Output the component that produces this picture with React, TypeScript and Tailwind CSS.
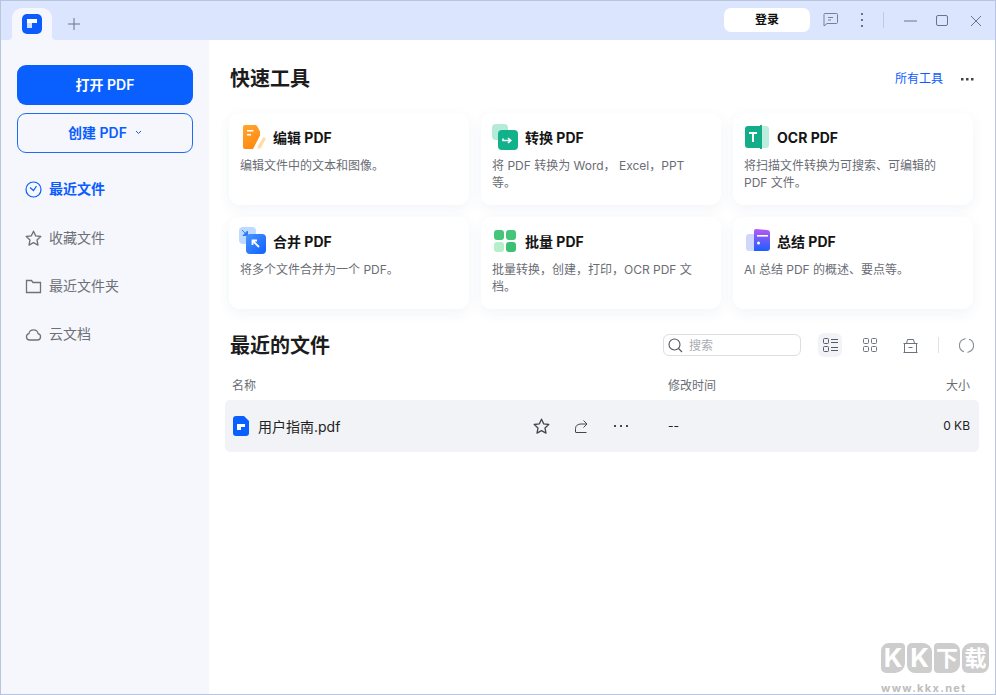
import React from "react";

const font = "font-['Inter','Noto_Sans_CJK_SC',sans-serif]";

const Logo = () => (
  <svg width="20" height="20" viewBox="0 0 20 20">
    <rect width="20" height="20" rx="5" fill="#0a5cff" />
    <path d="M5 5h10v4H5z" fill="#fff" />
    <path d="M5 9h5v5H5z" fill="#cfe0ff" />
  </svg>
);

const EditIcon = () => (
  <svg className="ml-[2px]" width="24" height="24" viewBox="0 0 24 24">
    <defs>
      <linearGradient id="ed" x1="0" y1="0" x2="0.5" y2="1">
        <stop offset="0" stopColor="#ffa733" />
        <stop offset="1" stopColor="#ff8a0f" />
      </linearGradient>
    </defs>
    <path d="M2 0h10c1 0 1.800.5 2.300 1.500L17 6.500v4L10 24H2a2 2 0 0 1-2-2V2a2 2 0 0 1 2-2z" fill="url(#ed)" />
    <path d="M4 5h6.500v1.500H4zM4 9h4v1.500H4z" fill="#fff" />
    <path d="M20.500 12l2.500 1.500L18 23l-3.500 1 .5-3.500z" fill="#ffdca8" />
  </svg>
);

const ConvertIcon = () => (
  <svg className="-ml-[1px]" width="26" height="26" viewBox="0 0 26 26">
    <rect x="0" y="0" width="16" height="16" rx="4" fill="#b4ead8" />
    <rect x="6" y="6" width="20" height="20" rx="4" fill="#11b18a" />
    <path d="M11 14.500v2h7M16 14l2.800 2.500L16 19" fill="none" stroke="#fff" strokeWidth="1.600" />
  </svg>
);

const OcrIcon = () => (
  <svg width="24" height="24" viewBox="0 0 24 24">
    <path d="M17 1h4a3 3 0 0 1 3 3v16a3 3 0 0 1-3 3h-4z" fill="#bdeedd" />
    <path d="M3 1h12v22H3a3 3 0 0 1-3-3V4a3 3 0 0 1 3-3z" fill="#14ad8a" />
    <rect x="15" y="0" width="2" height="24" fill="#14ad8a" />
    <path d="M4 7h8v2H9v8H7V9H4z" fill="#fff" />
  </svg>
);

const MergeIcon = () => (
  <svg className="-ml-[2px] -mt-[1px]" width="27" height="27" viewBox="0 0 27 27">
    <defs>
      <linearGradient id="me" x1="0" y1="0" x2="1" y2="1">
        <stop offset="0" stopColor="#4a94ff" />
        <stop offset="1" stopColor="#0f60ff" />
      </linearGradient>
    </defs>
    <rect x="0" y="0" width="17" height="17" rx="4" fill="#bedbff" />
    <path d="M3 3l5 5M8.500 4v4.500H4z" fill="#2f7cf6" stroke="#2f7cf6" strokeWidth="1" />
    <rect x="7" y="7" width="20" height="20" rx="4" fill="url(#me)" />
    <path d="M20 20l-6-6M13.500 18v-4.500H18" fill="none" stroke="#fff" strokeWidth="1.800" />
  </svg>
);

const BatchIcon = () => (
  <svg width="24" height="24" viewBox="0 0 24 24">
    <rect x="1" y="1" width="10" height="10" rx="3" fill="#45c57a" />
    <rect x="13" y="1" width="10" height="10" rx="3" fill="#45c57a" />
    <rect x="1" y="13" width="10" height="10" rx="3" fill="#b6efc9" />
    <rect x="13" y="13" width="10" height="10" rx="3" fill="#3cc074" />
  </svg>
);

const SummaryIcon = () => (
  <svg width="26" height="24" viewBox="0 0 26 24">
    <defs>
      <linearGradient id="su" x1="0" y1="0" x2="0" y2="1">
        <stop offset="0" stopColor="#b758f5" />
        <stop offset="1" stopColor="#1a60ff" />
      </linearGradient>
    </defs>
    <rect x="1" y="5" width="14" height="17" rx="3" fill="#cfd8fb" />
    <path d="M9 2a2 2 0 0 1 2-2l11 1a3 3 0 0 1 3 3v15a3 3 0 0 1-3 3H9z" fill="url(#su)" />
    <rect x="12" y="6" width="11" height="1.600" fill="#fff" />
    <circle cx="13.500" cy="14" r="1.500" fill="#fff" />
  </svg>
);

const tools = [
  { title: "编辑 PDF", desc: "编辑文件中的文本和图像。", icon: <EditIcon /> },
  { title: "转换 PDF", desc: "将 PDF 转换为 Word， Excel，PPT\n等。", icon: <ConvertIcon /> },
  { title: "OCR PDF", desc: "将扫描文件转换为可搜索、可编辑的\nPDF 文件。", icon: <OcrIcon /> },
  { title: "合并 PDF", desc: "将多个文件合并为一个 PDF。", icon: <MergeIcon /> },
  { title: "批量 PDF", desc: "批量转换，创建，打印，OCR PDF 文\n档。", icon: <BatchIcon /> },
  { title: "总结 PDF", desc: "AI 总结 PDF 的概述、要点等。", icon: <SummaryIcon /> },
];

const Clock = () => (
  <svg width="17" height="17" viewBox="0 0 17 17" fill="none" stroke="#0a5cff" strokeWidth="1.200">
    <circle cx="8.500" cy="8.500" r="7.500" />
    <path d="M5 6.500l3.500 3L11.500 5" />
  </svg>
);

const Star = ({ color = "#6f7278" }: { color?: string }) => (
  <svg width="17" height="17" viewBox="0 0 17 17" fill="none" stroke={color} strokeWidth="1.300" strokeLinejoin="round">
    <path d="M8.500 1.200l2.200 4.700 5.100.6-3.800 3.500 1 5.100-4.500-2.500-4.500 2.500 1-5.100L1.200 6.500l5.100-.6z" />
  </svg>
);

const Folder = () => (
  <svg width="17" height="17" viewBox="0 0 17 17" fill="none" stroke="#6f7278" strokeWidth="1.300">
    <path d="M1.500 2.500h5l1.500 2h7.500v10h-14z" />
  </svg>
);

const Cloud = () => (
  <svg width="17" height="17" viewBox="0 0 17 17" fill="none" stroke="#6f7278" strokeWidth="1.300">
    <path d="M4.500 14a3.200 3.200 0 0 1-.6-6.300 4.700 4.700 0 0 1 9.200 0A3.200 3.200 0 0 1 12.500 14z" />
  </svg>
);

const nav = [
  { label: "最近文件", icon: <Clock />, active: true },
  { label: "收藏文件", icon: <Star /> },
  { label: "最近文件夹", icon: <Folder /> },
  { label: "云文档", icon: <Cloud /> },
];

const App = () => {
  return (
    <div className={`relative w-[996px] h-[695px] overflow-hidden flex flex-col bg-white border border-[#b9c5de] ${font}`}>
      {/* title bar */}
      <div className="h-[39px] shrink-0 flex items-center bg-[#dbe6fe]">
        <div className="relative ml-[11px] mt-[7px] w-[40px] h-[32px] flex items-center justify-center bg-[#f5f7fc] rounded-t-[10px]">
          <svg className="absolute -left-[4px] bottom-0" width="4" height="4" viewBox="0 0 4 4" fill="#f5f7fc">
            <path d="M4 0v4H0a4 4 0 0 0 4-4z" />
          </svg>
          <svg className="absolute -right-[4px] bottom-0" width="4" height="4" viewBox="0 0 4 4" fill="#f5f7fc">
            <path d="M0 0v4h4a4 4 0 0 1-4-4z" />
          </svg>
          <div className="-mt-[1px]">
            <Logo />
          </div>
        </div>
        <svg className="ml-[16px] mt-[6px]" width="12" height="12" viewBox="0 0 12 12" stroke="#6d7384" strokeWidth="1">
          <path d="M6 0v12M0 6h12" />
        </svg>
        <div className="ml-auto -mt-[1px] w-[86px] h-[24px] rounded-[7px] bg-white flex items-center justify-center text-[12px] font-semibold text-[#111]">
          登录
        </div>
        <svg className="ml-[13px] -mt-[1px]" width="15" height="14" viewBox="0 0 15 14" fill="none" stroke="#7b8090" strokeWidth="1">
          <path d="M1.500.5h12a1 1 0 0 1 1 1v8a1 1 0 0 1-1 1H4L1 13V1.500a1 1 0 0 1 .5-1z" />
          <path d="M5 4.500h5M5 7h3" />
        </svg>
        <svg className="ml-[22px] -mt-[1px]" width="4" height="14" viewBox="0 0 4 14" fill="#6d7384">
          <rect x="1" y="0" width="2" height="2" />
          <rect x="1" y="6" width="2" height="2" />
          <rect x="1" y="12" width="2" height="2" />
        </svg>
        <div className="ml-[19px] -mt-[1px] w-px h-[16px] bg-[#c2c9d8]" />
        <svg className="ml-[20px]" width="13" height="12" viewBox="0 0 13 12" stroke="#6d7384" strokeWidth="1">
          <path d="M0 6h13" />
        </svg>
        <svg className="ml-[19px]" width="13" height="12" viewBox="0 0 13 12" fill="none" stroke="#6d7384" strokeWidth="1">
          <rect x=".5" y=".5" width="11" height="10" rx="1.500" />
        </svg>
        <svg className="ml-[21px] mr-[13px]" width="12" height="12" viewBox="0 0 12 12" stroke="#6d7384" strokeWidth="1">
          <path d="M1 1l10 10M11 1L1 11" />
        </svg>
      </div>

      <div className="flex-1 flex min-h-0">
        {/* sidebar */}
        <aside className="w-[208px] shrink-0 bg-[#f5f7fc] px-[16px] pt-[25px]">
          <button className="w-[176px] h-[40px] pb-[2px] rounded-[9px] bg-[#0a5fff] text-white text-[14px] font-semibold">
            打开 PDF
          </button>
          <button className="mt-[8px] w-[176px] h-[40px] pb-[2px] rounded-[9px] border border-[#1f6bf6] text-[#0a5cff] text-[14px] font-semibold flex items-center justify-center gap-[8px]">
            创建 PDF
            <svg width="7" height="5" viewBox="0 0 7 5" fill="none" stroke="#0a5cff">
              <path d="M1 1l2.500 2.500L6 1" />
            </svg>
          </button>
          <nav className="mt-[12px]">
            {nav.map((item) => (
              <div key={item.label} className="h-[48px] first:mb-[1px] flex items-center pl-[8px] gap-[7px]">
                {item.icon}
                <span className={`-mt-[2px] text-[14px] ${item.active ? "font-bold text-[#0a5cff]" : "text-[#6d7078]"}`}>
                  {item.label}
                </span>
              </div>
            ))}
          </nav>
        </aside>

        {/* main */}
        <main className="flex-1 pt-[25px] pl-[20px]">
          <div className="w-[745px] h-[28px] flex items-center justify-between pl-[1px]">
            <h1 className="text-[20px] font-bold text-[#1c1c1c]">快速工具</h1>
            <div className="flex items-center gap-[18px]">
              <span className="text-[12px] text-[#0a5cff]">所有工具</span>
              <svg width="13" height="3" viewBox="0 0 13 3" fill="#444">
                <rect x="0" y="0" width="2.500" height="2.500" />
                <rect x="5" y="0" width="2.500" height="2.500" />
                <rect x="10" y="0" width="2.500" height="2.500" />
              </svg>
            </div>
          </div>

          <div className="mt-[20px] w-[744px] grid grid-cols-3 gap-[12px]">
            {tools.map((t) => (
              <div key={t.title} className="h-[92px] rounded-[10px] bg-white px-[11px] pt-[12px] shadow-[0_4px_14px_rgba(40,70,140,0.06)]">
                <div className="h-[24px] flex items-center">
                  <div className="w-[33px] shrink-0 flex items-center justify-start pl-[1px]">{t.icon}</div>
                  <span className="text-[14px] font-bold text-[#151515]">{t.title}</span>
                </div>
                <p className="mt-[8px] text-[12px] leading-[17px] text-[#6a6d75] whitespace-pre-line">{t.desc}</p>
              </div>
            ))}
          </div>

          <div className="mt-[20px] w-[745px] h-[32px] flex items-center pl-[1px]">
            <h2 className="mt-[1px] text-[20px] font-bold text-[#1c1c1c]">最近的文件</h2>
            <div className="ml-auto flex items-center">
              <div className="w-[138px] h-[22px] rounded-[6px] border border-[#dcdee3] flex items-center pl-[4px] gap-[6px] text-[12px] text-[#a9acb3]">
                <svg width="15" height="15" viewBox="0 0 15 15" fill="none" stroke="#50535c" strokeWidth="1.100">
                  <circle cx="6.500" cy="6.500" r="5.500" />
                  <path d="M10.500 10.500L14 14" />
                </svg>
                <span className="mt-[1px]">搜索</span>
              </div>
              <div className="ml-[17px] w-[24px] h-[24px] rounded-[6px] bg-[#f2f3f7] flex items-center justify-center">
                <svg width="15" height="14" viewBox="0 0 15 14" fill="none" stroke="#555a66">
                  <rect x=".5" y=".5" width="5" height="5" rx="1" />
                  <rect x=".5" y="8.500" width="5" height="5" rx="1" />
                  <path d="M8 1.500h7M8 4.500h7M8 9.500h7M8 12.500h7" />
                </svg>
              </div>
              <svg className="ml-[21px]" width="14" height="14" viewBox="0 0 14 14" fill="none" stroke="#6d7280">
                <rect x=".5" y=".5" width="5" height="5" rx="1" />
                <rect x="8.500" y=".5" width="5" height="5" rx="1" />
                <rect x=".5" y="8.500" width="5" height="5" rx="1" />
                <rect x="8.500" y="8.500" width="5" height="5" rx="1" />
              </svg>
              <svg className="ml-[26px]" width="15" height="15" viewBox="0 0 15 15" fill="none" stroke="#6d7280">
                <path d="M.5 14.500h14M1.500 14.500v-9h12v9M.5 5.500h14M3.500 5.500l1-4h6l1 4M5.500 9.500h4" />
              </svg>
              <div className="ml-[20px] w-px h-[16px] bg-[#dfe1e6]" />
              <svg className="ml-[20px]" width="15" height="15" viewBox="0 0 15 15" fill="none" stroke="#8a8e98" strokeWidth="1.100">
                <path d="M5 1.300A6.500 6.500 0 0 0 5 13.700M10 1.300a6.500 6.500 0 0 1 0 12.400" />
                <path d="M5 1.300L6.500.5M10 13.700l-1.500.8" />
              </svg>
            </div>
          </div>

          <div className="mt-[13px] w-[741px] h-[24px] flex items-center pl-[3px] text-[12px] text-[#6a6d75]">
            <span>名称</span>
            <span className="ml-[412px]">修改时间</span>
            <span className="ml-auto">大小</span>
          </div>

          <div className="mt-[2px] -ml-[4px] w-[754px] h-[52px] rounded-[5px] bg-[#f1f3f7] flex items-center">
            <svg className="ml-[8px]" width="16" height="20" viewBox="0 0 16 20">
              <path d="M3 0h8l5 5v12a3 3 0 0 1-3 3H3a3 3 0 0 1-3-3V3a3 3 0 0 1 3-3z" fill="#0a5fff" />
              <path d="M4 8h8v3H8v3H4z" fill="#fff" />
            </svg>
            <span className="ml-[9px] w-[276px] text-[14px] text-[#222]">用户指南.pdf</span>
            <div className="-ml-[1px]">
              <Star color="#45474d" />
            </div>
            <svg className="ml-[24px]" width="14" height="14" viewBox="0 0 14 14" fill="none" stroke="#45474d">
              <path d="M1.500 13V9.500C1.500 6.500 4 5 7 5h6M9.500 1.500L13 5 9.500 8.500M1.500 13.500H12.500" />
            </svg>
            <svg className="ml-[26px]" width="14" height="3" viewBox="0 0 14 3" fill="#45474d">
              <rect x="0" y="0" width="2" height="2" />
              <rect x="6" y="0" width="2" height="2" />
              <rect x="12" y="0" width="2" height="2" />
            </svg>
            <span className="ml-[40px] text-[12px] text-[#222]">--</span>
            <span className="ml-auto mr-[9px] text-[12px] text-[#222]">0 KB</span>
          </div>
        </main>
      </div>

      {/* site watermark */}
      <div className="absolute left-[880px] top-[642px] flex gap-[2px] text-white font-bold text-[26px] leading-[30px]">
        <span className="w-[24px] h-[30px] bg-[#cdcdcd] rounded-[8px_4px_10px_5px] flex items-center justify-center">K</span>
        <span className="w-[25px] h-[30px] bg-[#cdcdcd] rounded-[5px_9px_4px_8px] flex items-center justify-center">K</span>
        <span className="w-[26px] h-[30px] bg-[#cdcdcd] rounded-[4px_8px_9px_4px] flex items-center justify-center text-[22px]">下</span>
        <span className="w-[27px] h-[30px] bg-[#cdcdcd] rounded-[9px_5px_8px_6px] flex items-center justify-center text-[22px]">载</span>
      </div>
      <div className="absolute left-[880px] top-[680px] text-[11px] leading-[14px] font-bold tracking-[1.300px] text-[#bdbdbd]">
        www.kkx.net
      </div>
    </div>
  );
};

export default App;
